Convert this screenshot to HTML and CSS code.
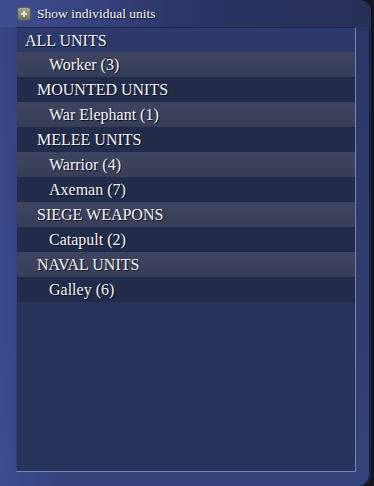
FILE: index.html
```html
<!DOCTYPE html>
<html lang="en">
  <head>
    <meta charset="UTF-8" />
    <title>Units</title>
    <link rel="stylesheet" href="styles.css">
  </head>
  <body>
    <div class="frame">
      <div class="header">
        <span class="toggle">
          <svg width="12" height="12" viewBox="0 0 12 12">
            <path d="M6 3v6M3 6h6" stroke="#f4f2e6" stroke-width="1.6" />
          </svg>
        </span>
        <span class="toggle-label">Show individual units</span>
      </div>

      <div class="panel">
        <div class="row top">ALL UNITS</div>
        <div class="row unit light">Worker (3)</div>
        <div class="row group dark">MOUNTED UNITS</div>
        <div class="row unit light">War Elephant (1)</div>
        <div class="row group dark">MELEE UNITS</div>
        <div class="row unit light">Warrior (4)</div>
        <div class="row unit dark">Axeman (7)</div>
        <div class="row group light">SIEGE WEAPONS</div>
        <div class="row unit dark">Catapult (2)</div>
        <div class="row group light">NAVAL UNITS</div>
        <div class="row unit dark">Galley (6)</div>
      </div>
    </div>
  </body>
</html>
```

FILE: styles.css
```css
body {
  margin: 0;
  background: #15161c;
  font-family: "Liberation Serif", "DejaVu Serif", serif;
  color: #f4f4f4;
}

.frame {
  width: 371px;
  height: 486px;
  box-sizing: border-box;
  padding: 0 15px 14px 16px;
  display: flex;
  flex-direction: column;
  border-radius: 6px 12px 12px 0;
  background:
    linear-gradient(to right, #4354a08a 0, #3f519900 70px),
    linear-gradient(to bottom, #2a3562 0, #33427a 100%);
  background-color: #2c396a;
  box-shadow: inset -2px 0 0 #1c2445;
}

.header {
  height: 27px;
  display: flex;
  align-items: center;
  gap: 7px;
  margin: 0 -15px 0 -16px;
  padding-left: 18px;
  background: linear-gradient(to right, #3e4e92, #2a3462 55%, #263059);
  border-top-right-radius: 12px;
}

.toggle {
  width: 12px;
  height: 12px;
  border-radius: 2px;
  background: linear-gradient(#a8a994, #6b6e5e);
  box-shadow: 0 0 0 1px #565a52;
  display: flex;
}

.toggle-label {
  font-size: 13.5px;
  text-shadow: 1px 1px 0 #10142a;
}

.panel {
  flex: 1;
  background: #27335a;
  border-top: 1px solid #1c2446;
  border-right: 1px solid #7383bb;
  border-bottom: 1px solid #7585bd;
  border-left: 1px solid #34427a;
}

.row {
  height: 25px;
  line-height: 25px;
  font-size: 16px;
  text-shadow: 1px 1px 0 #0c1020;
  white-space: nowrap;
}

.top {
  height: 24px;
  padding-left: 8px;
  background: linear-gradient(#2d3c6e, #2a3766);
}

.group {
  padding-left: 20px;
}

.unit {
  padding-left: 32px;
}

.light {
  background: linear-gradient(#3e4360, #393e57);
}

.dark {
  background: #222b4a;
}
```
